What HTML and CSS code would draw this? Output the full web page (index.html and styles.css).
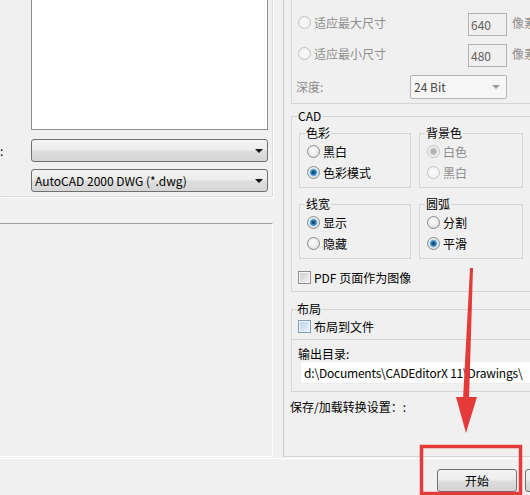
FILE: index.html
```html
<!DOCTYPE html>
<html lang="zh-CN">
<head>
<meta charset="utf-8">
<title>转换设置</title>
<link rel="stylesheet" href="styles.css">
</head>
<body>
<div class="window">
  <div class="main">
    <div class="left">
      <div class="lpanel-top">
        <div class="listbox"></div>
        <div class="lrow first">
          <span class="lcolon">:</span>
          <div class="combo"><span class="combo-text"></span><i class="arrow"></i></div>
        </div>
        <div class="lrow second">
          <span class="lcolon"></span>
          <div class="combo"><span class="combo-text">AutoCAD 2000 DWG (*.dwg)</span><i class="arrow"></i></div>
        </div>
      </div>
      <div class="lpanel-bottom"></div>
    </div>
    <div class="right">
      <div class="imggroup">
        <div class="irow">
          <div class="rlabel dis"><span class="radio disabled"></span>适应最大尺寸</div>
          <div class="num">640</div>
          <span class="unit">像素</span>
        </div>
        <div class="irow">
          <div class="rlabel dis"><span class="radio disabled"></span>适应最小尺寸</div>
          <div class="num">480</div>
          <span class="unit">像素</span>
        </div>
        <div class="irow">
          <div class="dlabel">深度:</div>
          <div class="dselect"><span class="combo-text">24 Bit</span><i class="arrow gray"></i></div>
        </div>
      </div>

      <fieldset class="group cad">
        <legend>CAD</legend>
        <div class="subgrid">
          <fieldset class="sub">
            <legend>色彩</legend>
            <div class="opt"><span class="radio"></span>黑白</div>
            <div class="opt"><span class="radio on"></span>色彩模式</div>
          </fieldset>
          <fieldset class="sub">
            <legend>背景色</legend>
            <div class="opt dis"><span class="radio disabled on-dis"></span>白色</div>
            <div class="opt dis"><span class="radio disabled"></span>黑白</div>
          </fieldset>
          <fieldset class="sub">
            <legend>线宽</legend>
            <div class="opt"><span class="radio on"></span>显示</div>
            <div class="opt"><span class="radio"></span>隐藏</div>
          </fieldset>
          <fieldset class="sub">
            <legend>圆弧</legend>
            <div class="opt"><span class="radio"></span>分割</div>
            <div class="opt"><span class="radio on"></span>平滑</div>
          </fieldset>
        </div>
        <div class="opt pdf"><span class="check"></span>PDF 页面作为图像</div>
      </fieldset>

      <fieldset class="group layout">
        <legend>布局</legend>
        <div class="opt"><span class="check hover"></span>布局到文件</div>
      </fieldset>

      <div class="outdir">
        <div class="outlabel">输出目录:</div>
        <div class="pathbox">d:\Documents\CADEditorX 11\Drawings\</div>
      </div>

      <div class="saveload">保存/加载转换设置：:</div>
    </div>
  </div>
  <div class="footer">
    <div class="btn">开始</div>
    <div class="btn"></div>
  </div>

  <svg class="annot" width="530" height="495" viewBox="0 0 530 495">
    <polygon points="470,268 473,268 469,400 463,400" fill="#e53a3a"/>
    <polygon points="456,397 477,397 466,433" fill="#e53a3a"/>
    <rect x="421.5" y="446.5" width="99" height="47" fill="none" stroke="#e53a3a" stroke-width="3.5"/>
  </svg>
</div>
</body>
</html>
```

FILE: styles.css
```css
* { box-sizing: border-box; }

html, body { margin: 0; padding: 0; }

body {
  width: 530px;
  height: 495px;
  overflow: hidden;
  background: #f0f0f0;
  font-family: "Noto Sans CJK SC", "Noto Sans", sans-serif;
  font-size: 12px;
  line-height: 16px;
  color: #000;
}

.window {
  position: relative;
  width: 530px;
  height: 495px;
  display: flex;
  flex-direction: column;
  overflow: hidden;
}

.main {
  display: flex;
  height: 458px;
  flex: none;
}

/* ---------- left side ---------- */
.left {
  width: 283px;
  flex: none;
}

.lpanel-top {
  width: 273px;
  height: 198px;
  padding-left: 31px;
  border-right: 1px solid #dcdcdc;
  border-bottom: 1px solid #dcdcdc;
  box-shadow: 1px 1px 0 #fff;
}

.listbox {
  width: 237px;
  height: 131px;
  margin-top: -1px;
  background: #fff;
  border: 1px solid #8c8f91;
}

.lrow {
  display: flex;
  align-items: center;
  margin-left: -31px;
}
.lrow.first { margin-top: 9px; }
.lrow.second { margin-top: 7px; }

.lcolon {
  width: 31px;
  flex: none;
}

.combo {
  width: 237px;
  height: 23px;
  border: 1px solid #707070;
  border-radius: 3px;
  background: linear-gradient(#f3f3f3, #ececec 48%, #dedede 52%, #d6d6d6);
  display: flex;
  align-items: center;
  padding-left: 3px;
}

.combo-text {
  flex: 1;
  white-space: nowrap;
}

.arrow {
  width: 0;
  height: 0;
  border-left: 4px solid transparent;
  border-right: 4px solid transparent;
  border-top: 4px solid #111;
  margin-right: 4px;
}
.arrow.gray { border-top-color: #9a9a9a; margin-right: 6px; }

.lpanel-bottom {
  width: 273px;
  height: 234px;
  margin-top: 26px;
  border-top: 1px solid #a0a0a0;
  border-right: 1px solid #fff;
  border-bottom: 1px solid #fff;
}

/* ---------- right side ---------- */
.right {
  flex: 1;
  height: 457px;
  border-left: 1px solid #c8c8c8;
  border-bottom: 1px solid #d6d6d6;
  padding-left: 7px;
  overflow: hidden;
}

.imggroup {
  width: 260px;
  height: 104px;
  border-left: 1px solid #d5d5d5;
  border-bottom: 1px solid #d5d5d5;
  padding: 9px 0 0 5px;
}

.irow {
  display: flex;
  align-items: center;
  height: 31px;
}

.rlabel {
  width: 171px;
  flex: none;
  display: flex;
  align-items: center;
  padding-left: 1px;
  padding-bottom: 4px;
}

.dis { color: #8d8d8d; }

.num {
  width: 39px;
  height: 23px;
  flex: none;
  border: 1px solid #b3b3b3;
  background: #f0f0f0;
  color: #5f5f5f;
  padding-left: 2px;
  line-height: 21px;
}

.unit {
  margin-left: 5px;
  color: #8d8d8d;
  white-space: nowrap;
  padding-bottom: 4px;
}

.dlabel {
  width: 114px;
  flex: none;
  margin-left: -1px;
  color: #8d8d8d;
}

.dselect {
  width: 97px;
  height: 24px;
  flex: none;
  border: 1px solid #b5b5b5;
  border-radius: 2px;
  background: #f6f6f6;
  color: #4a4a4a;
  display: flex;
  align-items: center;
  padding-left: 3px;
}

/* radios & checks */
.radio {
  width: 13px;
  height: 13px;
  flex: none;
  border-radius: 50%;
  border: 1px solid #8a8a8a;
  background: radial-gradient(circle at 45% 40%, #ffffff 0, #eeeeee 45%, #d2d2d2 100%);
  margin-right: 3px;
}
.radio.on {
  background:
    radial-gradient(circle, #0e3a5c 0, #1d5f92 1.6px, #5fa9dc 3.2px, #bfe0f5 4px, transparent 4.5px),
    radial-gradient(circle at 45% 40%, #ffffff 0, #eeeeee 45%, #d2d2d2 100%);
}
.radio.disabled {
  border-color: #c3c3c3;
  background: radial-gradient(circle, #fbfbfb 0, #eeeeee 100%);
}
.radio.disabled.on-dis {
  background:
    radial-gradient(circle, #a8a8a8 0, #bcbcbc 2.5px, #d8d8d8 3.8px, transparent 4.3px),
    radial-gradient(circle, #fbfbfb 0, #eeeeee 100%);
}

.check {
  width: 13px;
  height: 13px;
  flex: none;
  border: 1px solid #8e8f8f;
  box-shadow: inset 0 0 0 1px #f6f6f6;
  background: linear-gradient(135deg, #c9c9c9, #f4f4f4);
  margin-right: 3px;
}
.check.hover {
  border-color: #7a9cc0;
  background: linear-gradient(135deg, #b9d3ea, #eaf3fb);
}

/* group boxes */
.group, .sub {
  margin: 0;
  min-width: 0;
  border: 1px solid #d5d5d5;
}

legend {
  padding: 0 1px;
  margin-left: -2px;
  line-height: 16px;
}

.cad {
  width: 260px;
  margin-top: 4px;
  padding: 1px 0 3px 7px;
}

.subgrid {
  display: grid;
  grid-template-columns: 112px 104px;
  column-gap: 8px;
  row-gap: 8px;
}

.sub {
  padding: 0 0 4px 7px;
}

.opt {
  display: flex;
  align-items: center;
  height: 21px;
  white-space: nowrap;
}

.pdf {
  margin-top: 8px;
  margin-left: -1px;
}

.layout {
  width: 260px;
  margin-top: 9px;
  padding: 0 0 3px 6px;
}
.layout .opt { height: 19px; }

.outdir {
  width: 260px;
  border-left: 1px solid #d5d5d5;
  border-bottom: 1px solid #d5d5d5;
  padding: 6px 0 7px 6px;
}

.pathbox {
  margin-top: -1px;
  margin-left: 2px;
  height: 23px;
  background: #fff;
  border: 1px solid #ececec;
  padding-left: 3px;
  line-height: 21px;
  white-space: nowrap;
  letter-spacing: -0.2px;
}

.saveload {
  margin-top: 7px;
  margin-left: -1px;
  white-space: nowrap;
}

/* footer */
.footer {
  flex: 1;
  border-top: 1px solid #fff;
  display: flex;
  gap: 8px;
  padding: 10px 0 0 437px;
  overflow: hidden;
}

.btn {
  width: 80px;
  height: 23px;
  flex: none;
  border: 1px solid #707070;
  border-radius: 3px;
  background: linear-gradient(#f3f3f3, #ececec 48%, #dedede 52%, #d2d2d2);
  text-align: center;
  line-height: 21px;
}

.annot {
  position: absolute;
  left: 0;
  top: 0;
  pointer-events: none;
}
```
